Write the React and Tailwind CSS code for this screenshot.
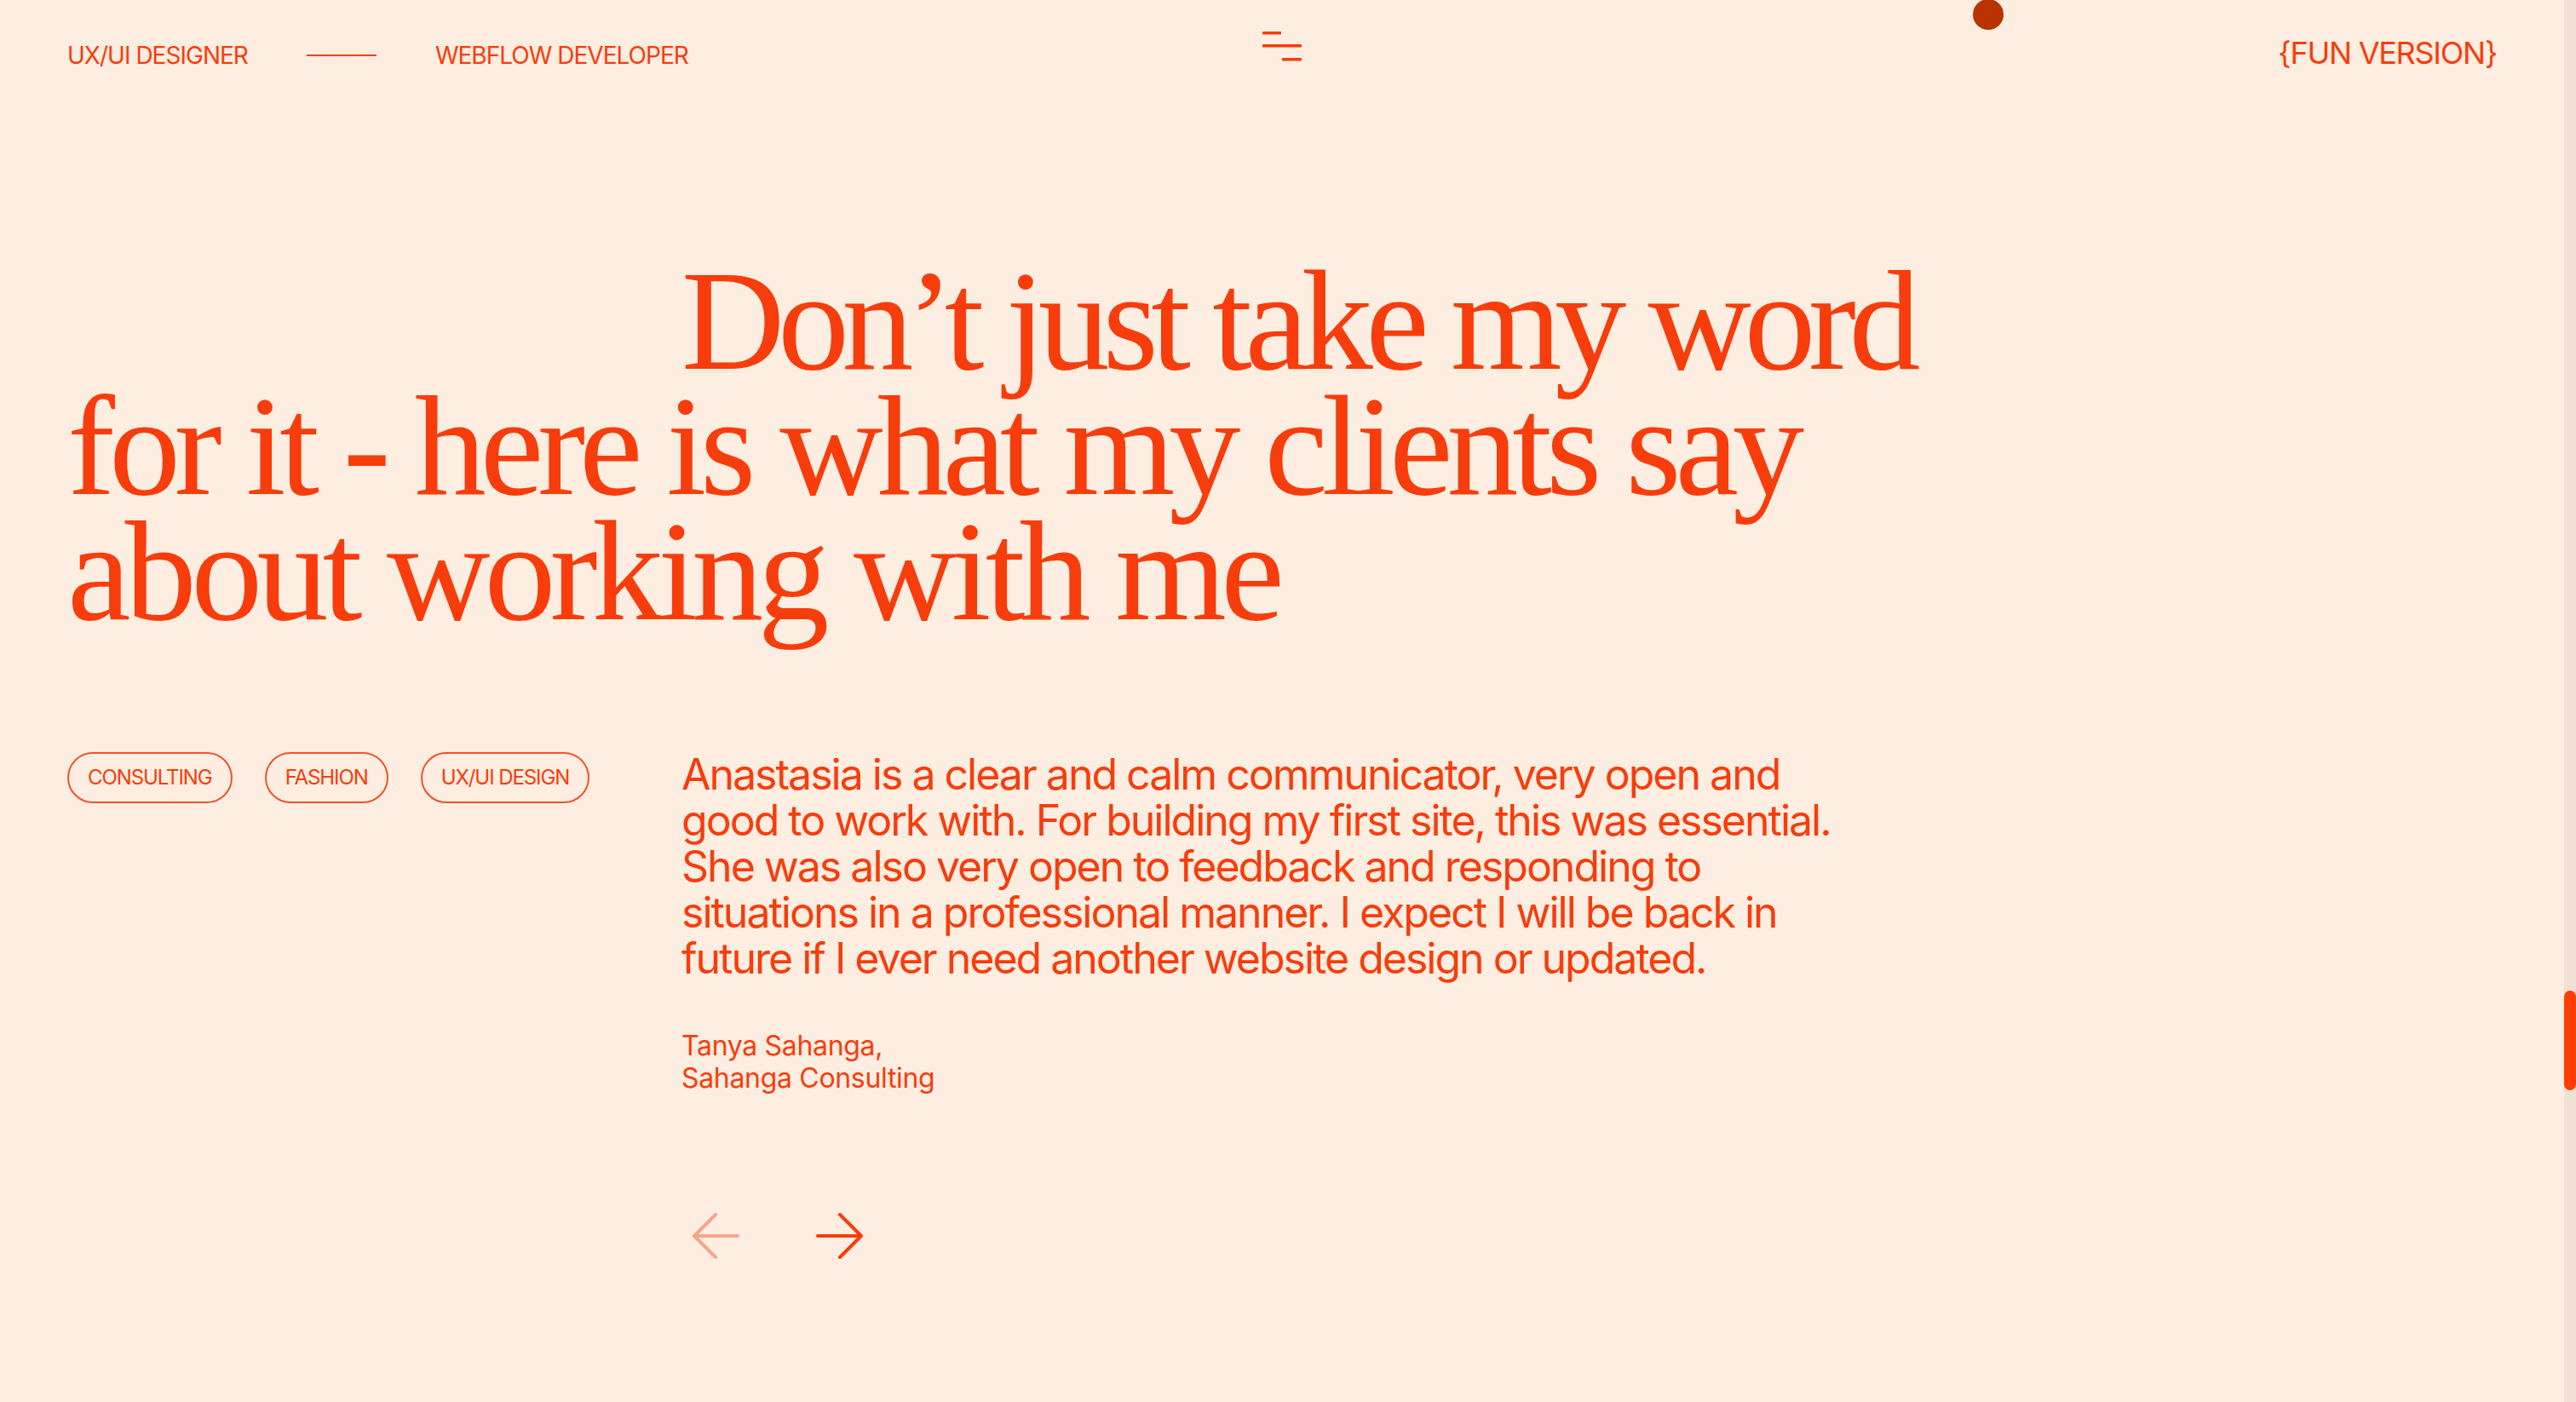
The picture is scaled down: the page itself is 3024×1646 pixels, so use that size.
import { useState } from 'react';

const tags = ['CONSULTING', 'FASHION', 'UX/UI DESIGN'];

function Arrow({ dir = 'right', className = '' }) {
  const d = dir === 'right' ? 'M2 27H53M28 2L53 27L28 52' : 'M54 27H3M28 2L3 27L28 52';
  return (
    <svg width="56" height="54" viewBox="0 0 56 54" fill="none" className={className}>
      <path d={d} stroke="currentColor" strokeWidth="4" strokeLinecap="round" strokeLinejoin="round" />
    </svg>
  );
}

function MenuIcon() {
  return (
    <svg width="48" height="40" viewBox="0 0 48 40" className="text-[#f63c0c]">
      <rect x="1" y="2" width="22" height="3.6" rx="1" fill="currentColor" />
      <rect x="1" y="17" width="46" height="3.6" rx="1" fill="currentColor" />
      <rect x="24" y="33" width="23" height="3.6" rx="1" fill="currentColor" />
    </svg>
  );
}

export default function App() {
  const [slide, setSlide] = useState(0);

  return (
    <div className="relative flex min-h-screen bg-[#feede1] text-[#f73d0c] font-['Inter',sans-serif]">
      <div className="flex-1 px-[79px]">
        <header className="grid grid-cols-3 items-center h-[130px]">
          <div className="flex items-center text-[28px] tracking-[-0.035em] leading-none">
            <span>UX/UI DESIGNER</span>
            <span className="mx-[69px] w-[82px] h-[2px] bg-[#f73d0c]" />
            <span>WEBFLOW DEVELOPER</span>
          </div>
          <div className="flex justify-center -mt-[20px]">
            <MenuIcon />
          </div>
          <div className="flex justify-end -mt-[6px] text-[36px] tracking-[-0.035em] leading-none">
            <span>{'{'}FUN VERSION{'}'}</span>
          </div>
        </header>

        <h2 className="mt-[173px] font-['Liberation_Serif',serif] text-[168px] leading-[147px] tracking-[-0.05em] indent-[721px]">
          Don’t just take my word
          <br />
          <span className="tracking-[-0.042em]">for it - here is what my clients say</span>
          <br />
          <span className="tracking-[-0.04em]">about working with me</span>
        </h2>

        <section className="mt-[139px] flex">
          <div className="w-[721px] flex gap-[38px] items-start">
            {tags.map((t) => (
              <span
                key={t}
                className="h-[60px] px-[22px] flex items-center rounded-full border-2 border-[#f0532a] text-[24px] tracking-[-0.045em]"
              >
                {t}
              </span>
            ))}
          </div>

          <div className="-mt-[1px]">
            <p className="text-[50px] leading-[54px] tracking-[-0.04em]">
              Anastasia is a clear and calm communicator, very open and
              <br />
              good to work with. For building my first site, this was essential.
              <br />
              She was also very open to feedback and responding to
              <br />
              situations in a professional manner. I expect I will be back in
              <br />
              future if I ever need another website design or updated.
            </p>

            <div className="mt-[57px] text-[32px] leading-[38px] tracking-[-0.01em]">
              <div>Tanya Sahanga,</div>
              <div>Sahanga Consulting</div>
            </div>

            <div className="mt-[127px] flex gap-[66px]">
              <button
                onClick={() => setSlide(Math.max(0, slide - 1))}
                className="p-[12px] text-[#f7a58b] cursor-pointer"
              >
                <Arrow dir="left" />
              </button>
              <button
                onClick={() => setSlide(slide + 1)}
                className="p-[12px] text-[#f73d0c] cursor-pointer"
              >
                <Arrow dir="right" />
              </button>
            </div>
          </div>
        </section>
      </div>

      <div className="relative w-[14px] bg-[#f4e1d5]">
        <div className="absolute left-0 top-[1163px] w-[14px] h-[117px] rounded-full bg-[#fc3d06]" />
      </div>

      <div className="absolute left-[2316px] -top-[1px] w-[36px] h-[36px] rounded-full bg-[#b83300]" />
    </div>
  );
}
